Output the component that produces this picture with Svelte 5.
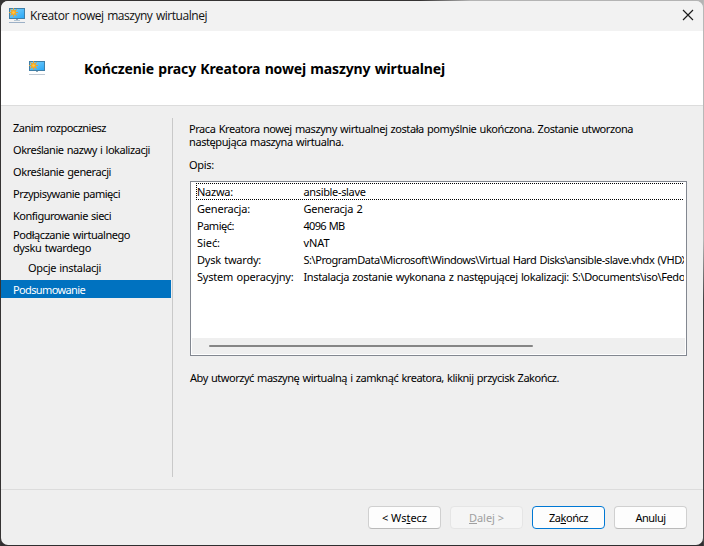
<script>
  const steps = [
    { lines: [['Zanim rozpoczniesz', 93]] },
    { lines: [['Określanie nazwy i lokalizacji', 137]] },
    { lines: [['Określanie generacji', 98]] },
    { lines: [['Przypisywanie pamięci', 107]] },
    { lines: [['Konfigurowanie sieci', 98]] },
    { lines: [['Podłączanie wirtualnego', 117], ['dysku twardego', 78]] },
    { lines: [['Opcje instalacji', 73]], nested: true },
    { lines: [['Podsumowanie', 72]], current: true },
  ];

  const summary = [
    ['Nazwa:', 36, 'ansible-slave', 62],
    ['Generacja:', 53, 'Generacja 2', 59],
    ['Pamięć:', 37, '4096 MB', 41],
    ['Sieć:', 23, 'vNAT', 26],
    ['Dysk twardy:', 64, 'S:\\ProgramData\\Microsoft\\Windows\\Virtual Hard Disks\\ansible-slave.vhdx (VHDX', 384],
    ['System operacyjny:', 96.5, 'Instalacja zostanie wykonana z następującej lokalizacji: S:\\Documents\\iso\\Fedo', 381.5],
  ];

  // Adjusts tracking so that a label takes its nominal width.
  function fit(node, width) {
    const natural = node.getBoundingClientRect().width;
    node.style.letterSpacing = `${(width - natural) / node.textContent.length}px`;
  }
</script>

{#snippet monitor(height)}
  <svg class="monitor" viewBox="0 0 16 {height}" width="16" height={height}>
    <defs>
      <linearGradient id="screen" x1="0" y1="0" x2="1" y2="1">
        <stop offset="0" stop-color="#7fd2fb" />
        <stop offset="1" stop-color="#2ba8f6" />
      </linearGradient>
    </defs>
    <rect x="0" y="0" width="16" height={height - 4} fill="#3f7fa8" />
    <rect x="1" y="1" width="14" height={height - 6} fill="url(#screen)" />
    <rect x="7" y={height - 4} width="2" height="1" fill="#8ea6b8" />
    {#if height > 14}
      <rect x="5" y={height - 3} width="6" height="1" fill="#b4c6d4" />
    {/if}
    <path d="M4.5 0v9M0 4.5h9M1.3 1.3l6.4 6.4M7.7 1.3L1.3 7.7" stroke="#e2a43a" stroke-width="1.1" />
    <circle cx="4.5" cy="4.5" r="2.5" fill="#f9a91c" />
    <circle cx="4.5" cy="4.5" r="1.2" fill="#ffc94e" />
    <rect class="stand" x="0" y={height - 1} width="16" height="1" />
  </svg>
{/snippet}

<div class="desktop">
  <div class="window">
    <header class="titlebar">
      <span class="app-icon">{@render monitor(15)}</span>
      <span class="title"><span use:fit={177}>Kreator nowej maszyny wirtualnej</span></span>
      <svg class="close" width="12" height="12" viewBox="0 0 12 12">
        <path d="M1 1l10 10M11 1L1 11" stroke="#1b1b1b" stroke-width="1.15" />
      </svg>
    </header>
    <section class="banner">
      <span class="banner-icon">{@render monitor(14)}</span>
      <h1><span use:fit={361}>Kończenie pracy Kreatora nowej maszyny wirtualnej</span></h1>
    </section>
    <div class="body">
      <nav>
        {#each steps as step}
          <div class="step" class:nested={step.nested} class:current={step.current} class:double={step.lines.length > 1}>
            {#each step.lines as [text, width]}
              <div><span use:fit={width}>{text}</span></div>
            {/each}
          </div>
        {/each}
      </nav>
      <main>
        <div class="intro">
          <div><span use:fit={444}>Praca Kreatora nowej maszyny wirtualnej została pomyślnie ukończona. Zostanie utworzona</span></div>
          <div><span use:fit={154.5}>następująca maszyna wirtualna.</span></div>
        </div>
        <p class="caption"><span use:fit={25}>Opis:</span></p>
        <div class="list">
          <div class="rows">
            {#each summary as [name, nameWidth, value, valueWidth], i}
              <div class="row" class:focused={i === 0}>
                <div class="name"><span use:fit={nameWidth}>{name}</span></div>
                <div class="value"><span use:fit={valueWidth}>{value}</span></div>
              </div>
            {/each}
          </div>
          <div class="scrollbar"><div class="thumb"></div></div>
        </div>
        <p class="hint"><span use:fit={369}>Aby utworzyć maszynę wirtualną i zamknąć kreatora, kliknij przycisk Zakończ.</span></p>
      </main>
    </div>
    <footer>
      <button><span use:fit={45}>&lt; Ws<u>t</u>ecz</span></button>
      <button disabled><span use:fit={35}><u>D</u>alej &gt;</span></button>
      <button class="primary"><span use:fit={39}>Za<u>k</u>ończ</span></button>
      <button><span use:fit={30}>Anuluj</span></button>
    </footer>
  </div>
</div>

<style>
  .desktop {
    box-sizing: border-box;
    width: 704px;
    height: 546px;
    padding: 1px;
    overflow: hidden;
    background: linear-gradient(90deg, #353333 0 1px, transparent 1px),
      linear-gradient(#b8b8b8 0 240px, #424143 300px) right / 1px 100% no-repeat,
      linear-gradient(90deg, #353333 0 420px, #b4b4b4 470px) top / 100% 8px no-repeat,
      #302e30;
    font: 11px/13px Tahoma, "Noto Sans", sans-serif;
    word-spacing: 0.8px;
    color: #000;
  }
  .window {
    display: flex;
    flex-direction: column;
    height: 544px;
    overflow: hidden;
    border-radius: 7px;
    background: #efefef;
  }
  span {
    display: inline-block;
    vertical-align: top;
    white-space: pre;
  }
  svg {
    display: block;
  }
  .stand {
    fill: #c0c9d4;
  }
  .titlebar {
    display: flex;
    flex: none;
    height: 30px;
    background: #f2f2f2;
  }
  .app-icon {
    margin: 7px 0 0 8px;
  }
  .app-icon .stand {
    fill: #9cb0c6;
  }
  .title {
    margin: 6px auto 0 5px;
    font: 12px/18px "Segoe UI", "Open Sans", sans-serif;
    color: #111;
  }
  .close {
    margin: 8px 9px 0 0;
  }
  .banner {
    display: flex;
    flex: none;
    box-sizing: border-box;
    height: 75px;
    background: #fff;
    border-bottom: 1px solid #dcdcdc;
  }
  .banner-icon {
    margin: 30px 0 0 28px;
  }
  h1 {
    margin: 28px 0 0 39px;
    font: bold 14px/20px Tahoma, "Noto Sans", sans-serif;
  }
  .body {
    display: flex;
    flex: none;
    height: 383px;
  }
  nav {
    width: 170px;
    height: 359px;
    margin-top: 12px;
    padding-right: 1px;
    border-right: 1px solid #c9c9c9;
  }
  .step {
    height: 18px;
    margin-bottom: 4px;
    padding-left: 12px;
    line-height: 19px;
  }
  .step.double {
    height: 28px;
    margin-bottom: 2px;
    line-height: 13px;
  }
  .step.nested {
    padding-left: 27px;
  }
  .current {
    background: #0072c0;
    color: #fff;
  }
  main {
    width: 498px;
    margin: 16px 0 0 16px;
  }
  p {
    margin: 0;
  }
  .caption {
    margin-top: 10px;
  }
  .list {
    display: flex;
    flex-direction: column;
    box-sizing: border-box;
    width: 497px;
    height: 175px;
    margin: 10px 0 0 1px;
    padding: 1px;
    background: #fff;
    border: 1px solid #828790;
  }
  .rows {
    flex: 1;
    margin-right: 1px;
    overflow: hidden;
  }
  .row {
    display: flex;
    box-sizing: border-box;
    height: 17px;
    margin-left: 4px;
    padding-left: 1px;
    line-height: 17px;
  }
  .focused {
    background: repeating-linear-gradient(90deg, #000 0 1px, #fff 1px 2px) top / 100% 1px no-repeat,
      repeating-linear-gradient(90deg, #000 0 1px, #fff 1px 2px) bottom / 100% 1px no-repeat,
      repeating-linear-gradient(#000 0 1px, #fff 1px 2px) left / 1px 100% no-repeat;
  }
  .name {
    flex: none;
    width: 106.5px;
  }
  .scrollbar {
    height: 16px;
    padding: 7px 0 0 17px;
    box-sizing: border-box;
    background: #efefef;
  }
  .thumb {
    width: 324px;
    height: 2px;
    border-radius: 1px;
    background: #858585;
  }
  .hint {
    margin: 15px 0 0 1px;
  }
  footer {
    display: flex;
    flex: 1;
    align-items: flex-start;
    justify-content: flex-end;
    padding: 16px 16px 0 0;
    border-top: 1px solid #dcdcdc;
  }
  button {
    box-sizing: border-box;
    width: 73px;
    height: 23px;
    margin-left: 9px;
    padding: 0;
    border: 1px solid #d0d0d0;
    border-bottom-color: #bababa;
    border-radius: 4px;
    background: #fdfdfd;
    color: #000;
    font: inherit;
    line-height: 20px;
  }
  button:disabled {
    border-color: #e5e5e5;
    background: #f5f5f5;
    color: #a0a0a0;
  }
  .primary {
    border-color: #0078d4;
  }
  u {
    text-underline-offset: 1px;
  }
</style>
